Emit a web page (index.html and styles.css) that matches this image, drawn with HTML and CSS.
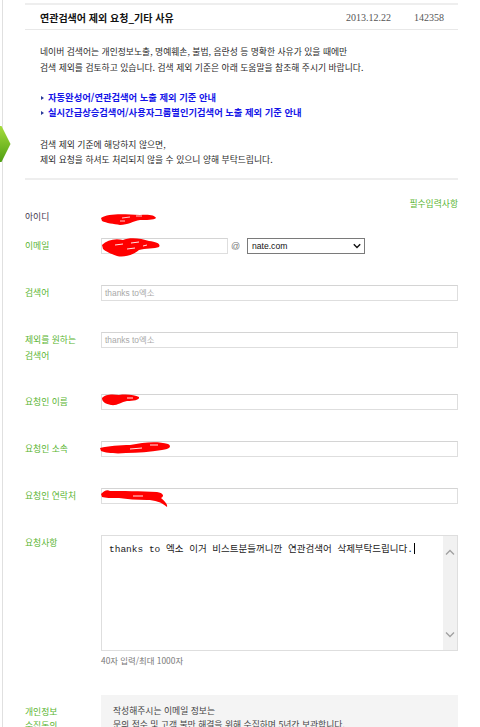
FILE: index.html
```html
<!DOCTYPE html>
<html lang="ko">
<head>
<meta charset="utf-8">
<title>연관검색어 제외 요청</title>
<link rel="stylesheet" href="styles.css">
</head>
<body>
<svg class="side-arrow" width="11" height="38" viewBox="0 0 11 38">
  <defs>
    <linearGradient id="ga" x1="0" y1="0" x2="0" y2="1">
      <stop offset="0" stop-color="#a6dc3c"/>
      <stop offset="1" stop-color="#4f9f12"/>
    </linearGradient>
  </defs>
  <path d="M0 0 L1.5 0 L10.5 18 L1.5 36 L0 36 Z" fill="url(#ga)"/>
</svg>
<div class="frame">
  <div class="head">
    <div class="title">연관검색어 제외 요청_기타 사유</div>
    <div class="date">2013.12.22</div>
    <div class="num">142358</div>
  </div>

  <div class="intro">
    <p class="p1">네이버 검색어는 개인정보노출, 명예훼손, 불법, 음란성 등 명확한 사유가 있을 때에만<br>검색 제외를 검토하고 있습니다. 검색 제외 기준은 아래 도움말을 참조해 주시기 바랍니다.</p>
    <ul class="links">
      <li><span class="tri"></span>자동완성어/연관검색어 노출 제외 기준 안내</li>
      <li><span class="tri"></span>실시간급상승검색어/사용자그룹별인기검색어 노출 제외 기준 안내</li>
    </ul>
    <p class="p2">검색 제외 기준에 해당하지 않으면,<br>제외 요청을 하셔도 처리되지 않을 수 있으니 양해 부탁드립니다.</p>
  </div>

  <div class="form">
    <div class="req">필수입력사항</div>

    <div class="row row-id">
      <div class="label dark">아이디</div>
      <div class="field">
        <svg class="scribble" width="58" height="15" viewBox="0 0 58 15"><path d="M1 6 C8 1 24 2 40 3 C48 2 55 3 56 6 C54 8 46 8 40 8 C33 9 28 13 20 13 C14 12 6 11 2 9 Z" fill="#f00"/><path d="M22 6 L30 5 M36 4 L42 4 M20 9 L25 9" stroke="#fff" stroke-width="0.8"/></svg>
      </div>
    </div>

    <div class="row row-email">
      <div class="label">이메일</div>
      <div class="field email">
        <div class="input small">
          <svg class="scribble s-email" width="62" height="21" viewBox="0 0 62 21"><path d="M1 8 C6 3 14 1 22 3 C28 0 40 1 48 4 C56 5 60 7 58 10 C54 12 44 11 38 13 C34 17 24 21 16 19 C10 17 4 14 2 12 Z" fill="#f00"/><path d="M14 8 L22 7 M30 6 L38 5 M26 12 L34 11 M42 9 L46 8" stroke="#fff" stroke-width="0.9"/></svg>
        </div>
        <span class="at">@</span>
        <div class="select">
          <span>nate.com</span>
          <svg width="8" height="6" viewBox="0 0 8 6"><path d="M0.8 1.2 L4 4.4 L7.2 1.2" fill="none" stroke="#111" stroke-width="1.4"/></svg>
        </div>
      </div>
    </div>

    <div class="row">
      <div class="label">검색어</div>
      <div class="field"><div class="input"><span class="ph">thanks to엑소</span></div></div>
    </div>

    <div class="row">
      <div class="label two">제외를 원하는<br>검색어</div>
      <div class="field"><div class="input"><span class="ph">thanks to엑소</span></div></div>
    </div>

    <div class="row">
      <div class="label">요청인 이름</div>
      <div class="field"><div class="input">
        <svg class="scribble s-name" width="40" height="14" viewBox="0 0 40 14"><path d="M1 5 C4 1 12 1 18 2 C26 1 34 2 38 4 C39 7 32 8 26 8 C20 9 16 13 10 12 C5 11 1 9 1 5 Z" fill="#f00"/><path d="M26 5 L32 5" stroke="#fff" stroke-width="0.9"/></svg>
      </div></div>
    </div>

    <div class="row">
      <div class="label">요청인 소속</div>
      <div class="field"><div class="input">
        <svg class="scribble s-org" width="72" height="14" viewBox="0 0 72 14"><path d="M0 7 C8 5 20 4 30 4 C44 1 58 0 68 3 C72 5 70 8 62 9 C50 11 38 12 26 12 C16 13 6 12 1 10 Z" fill="#f00"/><path d="M30 8 L42 7 M50 4 L58 4" stroke="#fff" stroke-width="0.9"/></svg>
      </div></div>
    </div>

    <div class="row">
      <div class="label">요청인 연락처</div>
      <div class="field"><div class="input">
        <svg class="scribble s-tel" width="68" height="19" viewBox="0 0 68 19"><path d="M0 5 C3 2 6 0 9 2 C20 2 40 2 56 3 C62 4 64 7 60 9 C64 12 67 16 66 18 C60 13 54 11 46 11 C36 11 26 10 18 9 C10 9 4 9 1 8 Z" fill="#f00"/><path d="M32 7 L42 7" stroke="#fff" stroke-width="0.9"/></svg>
      </div></div>
    </div>

    <div class="row row-text">
      <div class="label">요청사항</div>
      <div class="field">
        <div class="textarea">
          <div class="ta-text">thanks to 엑소 이거 비스트분들꺼니깐 연관검색어 삭제부탁드립니다.<span class="caret"></span></div>
          <div class="ta-bar">
            <svg width="10" height="7" viewBox="0 0 10 7"><path d="M1 5.5 L5 1.5 L9 5.5" fill="none" stroke="#a0a0a0" stroke-width="1.3"/></svg>
            <svg width="10" height="7" viewBox="0 0 10 7"><path d="M1 1.5 L5 5.5 L9 1.5" fill="none" stroke="#a0a0a0" stroke-width="1.3"/></svg>
          </div>
        </div>
        <div class="count">40자 입력/최대 1000자</div>
      </div>
    </div>

    <div class="row row-agree">
      <div class="label agree">개인정보<br>수집동의</div>
      <div class="field">
        <div class="agree-box">작성해주시는 이메일 정보는<br>문의 접수 및 고객 불만 해결을 위해 수집하며 5년간 보관합니다.</div>
      </div>
    </div>
  </div>
</div>
</body>
</html>
```

FILE: styles.css
```css
* { box-sizing: border-box; }
html, body { margin: 0; padding: 0; background: #fff; }
body {
  position: relative;
  width: 480px;
  height: 727px;
  overflow: hidden;
  font-family: "Noto Sans CJK KR", "Noto Sans", sans-serif;
  font-size: 8.8px;
  color: #2a2a2a;
}
.side-arrow { position: absolute; left: 0; top: 126px; }

.frame {
  margin-left: 2px;
  border-left: 1px solid #e0e0e0;
  padding: 3px 22px 0 22px;
  min-height: 727px;
}

.head {
  display: flex;
  align-items: center;
  height: 27px;
  border-top: 2px solid #eeeeee;
  border-bottom: 1px solid #e8e8e8;
}
.title {
  flex: 1;
  padding-left: 15px;
  font-weight: bold;
  font-size: 10px;
  color: #111;
}
.date, .num {
  font-family: "Liberation Serif", serif;
  font-size: 10px;
  color: #555;
}
.date { width: 68px; }
.num { width: 44px; }

.intro { padding-left: 15px; }
.intro p { margin: 0; }
.p1 { margin-top: 14px !important; line-height: 16px; }
.links {
  list-style: none;
  margin: 14px 0 0;
  padding: 0;
  line-height: 15px;
  font-size: 9.3px;
  font-weight: bold;
  color: #1414e8;
}
.links li { display: flex; align-items: center; }
.tri {
  display: inline-block;
  width: 0; height: 0;
  border-left: 3.5px solid #2a3a9a;
  border-top: 2.5px solid transparent;
  border-bottom: 2.5px solid transparent;
  margin: 0 4px 0 1px;
}
.p2 { margin-top: 17px !important; line-height: 15px; }

.form {
  margin-top: 11px;
  border-top: 2px solid #eeeeee;
}
.req {
  margin-top: 18px;
  text-align: right;
  line-height: 11px;
  color: #5ab532;
}

.row {
  display: grid;
  grid-template-columns: 76px 1fr;
  margin-bottom: 31px;
}
.row-id { margin-bottom: 13px; }
.label {
  line-height: 16px;
  color: #5ab532;
  white-space: nowrap;
}
.label.dark { color: #45394f; }
.label.two { line-height: 15.5px; }
.field { position: relative; min-height: 16px; }

.input {
  position: relative;
  height: 16px;
  border: 1px solid #dedede;
  border-top-color: #d4d4d4;
  background: #fff;
  padding-left: 3px;
  line-height: 14px;
}
.ph {
  font-family: "Liberation Sans", "Noto Sans CJK KR", sans-serif;
  font-size: 8.4px;
  color: #a8a8a8;
}
.scribble { position: absolute; left: -1px; top: -2px; }
.row-id .scribble { left: -1px; top: 3px; }
.s-email { left: -1px; top: -2px; }
.s-name { left: -1px; top: -2px; }
.s-org { left: -2px; top: -1px; }
.s-tel { left: -1px; top: 0px; }

.email { display: flex; align-items: center; }
.input.small { width: 127px; }
.at {
  width: 19px;
  padding-left: 3px;
  font-family: "Liberation Sans", sans-serif;
  font-size: 9px;
  color: #777;
}
.select {
  width: 118px;
  height: 16px;
  border: 1px solid #7a7a7a;
  display: flex;
  align-items: center;
  justify-content: space-between;
  padding: 0 3px 0 4px;
  font-family: "Liberation Sans", sans-serif;
  font-size: 8.6px;
  color: #111;
}

.row-text { margin-bottom: 29px; }
.textarea {
  display: flex;
  height: 116px;
  border: 1px solid #dedede;
}
.ta-text {
  flex: 1;
  padding: 7px 0 0 7px;
  line-height: 12px;
  font-family: "Liberation Mono", "Noto Sans CJK KR", monospace;
  font-size: 9.5px;
  color: #222;
}
.caret {
  display: inline-block;
  width: 1px;
  height: 11px;
  background: #000;
  vertical-align: -2px;
  margin-left: 1px;
}
.ta-bar {
  width: 14px;
  background: #f1f1f1;
  display: flex;
  flex-direction: column;
  align-items: center;
  justify-content: space-between;
  padding: 13px 0 12px;
}
.count {
  margin-top: 3px;
  line-height: 12px;
  font-size: 8.4px;
  color: #777;
}

.row-agree { margin-bottom: 0; }
.label.agree { padding-top: 10px; line-height: 14px; }
.agree-box {
  background: #f4f4f4;
  padding: 9px 12px 20px;
  line-height: 14px;
  color: #444;
}
```
